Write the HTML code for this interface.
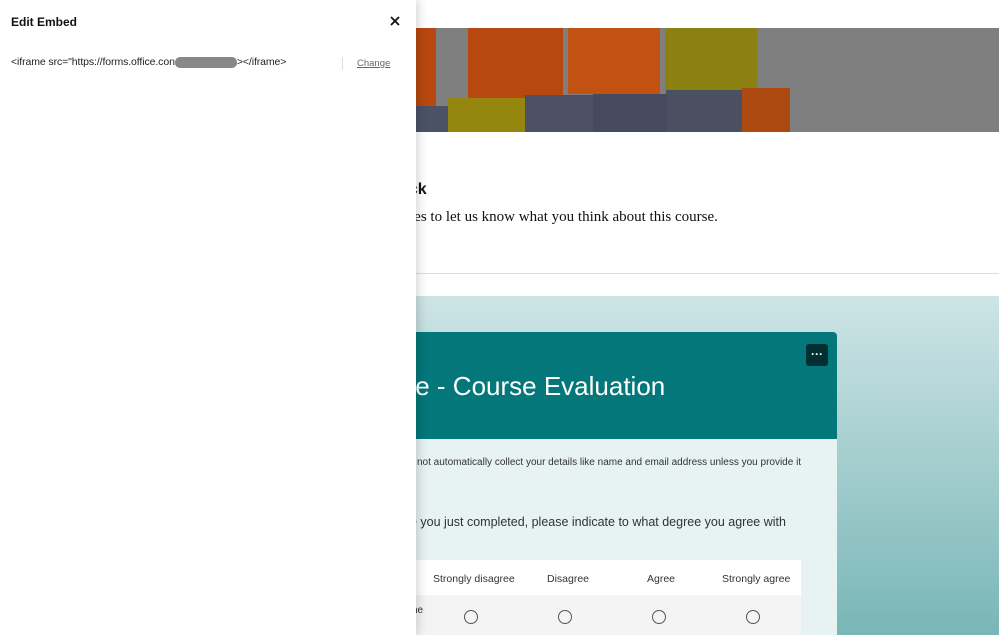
<!DOCTYPE html>
<html><head><style>
body{margin:0;width:999px;height:635px;overflow:hidden;position:relative;font-family:"Liberation Sans",sans-serif;background:#fff}
.a{position:absolute}
</style></head><body>
<div class="a" style="left:400px;top:28px;width:599px;height:104px;background:#7f7f7f;overflow:hidden">
<div class="a" style="left:0;top:0;width:36px;height:79px;background:#b8480f"></div>
<div class="a" style="left:68px;top:0;width:95px;height:75px;background:#b64810"></div>
<div class="a" style="left:168px;top:0;width:92px;height:66px;background:#c25212"></div>
<div class="a" style="left:265px;top:0;width:92px;height:62px;background:#8b8012"></div>
<div class="a" style="left:0;top:78px;width:48px;height:26px;background:#4c5266"></div>
<div class="a" style="left:48px;top:70px;width:77px;height:34px;background:#958610"></div>
<div class="a" style="left:125px;top:67px;width:68px;height:37px;background:#4b5065"></div>
<div class="a" style="left:193px;top:66px;width:73px;height:38px;background:#454a5e"></div>
<div class="a" style="left:266px;top:62px;width:76px;height:42px;background:#4a4f62"></div>
<div class="a" style="left:342px;top:60px;width:48px;height:44px;background:#ad4a12"></div>
</div>
<div class="a" style="left:400px;top:181px;font:bold 16px 'Liberation Sans';color:#111">ack</div>
<div class="a" style="left:410px;top:209px;font:15px 'Liberation Serif',serif;color:#111">tes to let us know what you think about this course.</div>
<div class="a" style="left:400px;top:273px;width:599px;height:1px;background:#ddd"></div>
<div class="a" style="left:400px;top:296px;width:599px;height:339px;background:linear-gradient(#cde4e5,#79b6b7)"></div>
<div class="a" style="left:380px;top:332px;width:457px;height:303px;background:#e7f2f2;border-radius:4px 4px 0 0"></div>
<div class="a" style="left:380px;top:332px;width:457px;height:107px;background:#04777a;border-radius:4px 4px 0 0"></div>
<div class="a" style="left:806px;top:344px;width:22px;height:22px;background:#022f30;border-radius:3px;color:#fff;font:bold 12px sans-serif;text-align:center;line-height:20px">···</div>
<div class="a" style="left:408px;top:371px;font:26px 'Liberation Sans',sans-serif;color:#fff">te - Course Evaluation</div>
<div class="a" style="left:417px;top:457px;font:10px 'Liberation Sans';color:#333">not automatically collect your details like name and email address unless you provide it</div>
<div class="a" style="left:410px;top:515px;font:12.5px 'Liberation Sans';color:#333">e you just completed, please indicate to what degree you agree with</div>
<div class="a" style="left:400px;top:560px;width:401px;height:35px;background:#fff"></div>
<div class="a" style="left:400px;top:595px;width:401px;height:40px;background:#f4f4f4"></div>
<div class="a" style="left:433px;top:573px;font:10.5px 'Liberation Sans';color:#333">Strongly disagree</div>
<div class="a" style="left:547px;top:573px;font:10.5px 'Liberation Sans';color:#333">Disagree</div>
<div class="a" style="left:647px;top:573px;font:10.5px 'Liberation Sans';color:#333">Agree</div>
<div class="a" style="left:722px;top:573px;font:10.5px 'Liberation Sans';color:#333">Strongly agree</div>
<div class="a" style="left:412px;top:605px;font:10px 'Liberation Sans';color:#333">ne</div>
<div class="a" style="left:464px;top:610px;width:12px;height:12px;border:1px solid #555;border-radius:50%"></div>
<div class="a" style="left:558px;top:610px;width:12px;height:12px;border:1px solid #555;border-radius:50%"></div>
<div class="a" style="left:652px;top:610px;width:12px;height:12px;border:1px solid #555;border-radius:50%"></div>
<div class="a" style="left:746px;top:610px;width:12px;height:12px;border:1px solid #555;border-radius:50%"></div>
<div class="a" style="left:0;top:0;width:416px;height:635px;background:#fff;box-shadow:2px 0 10px rgba(0,0,0,.18)"></div>
<div class="a" style="left:11px;top:15px;font:bold 12px 'Liberation Sans';color:#111">Edit Embed</div>
<svg class="a" style="left:390px;top:16px" width="10" height="10"><path d="M1 1L9 9M9 1L1 9" stroke="#111" stroke-width="1.8"/></svg>
<div class="a" style="left:11px;top:56px;font:10.5px 'Liberation Sans';color:#222;letter-spacing:-0.1px">&lt;iframe src="https://forms.office.con<span style="display:inline-block;width:62px;height:11px;background:#888;border-radius:5px;vertical-align:middle"></span>&gt;&lt;/iframe&gt;</div>
<div class="a" style="left:342px;top:57px;width:1px;height:13px;background:#ddd"></div>
<div class="a" style="left:357px;top:58px;font:9.5px 'Liberation Sans';color:#666;text-decoration:underline">Change</div>
</body></html>
